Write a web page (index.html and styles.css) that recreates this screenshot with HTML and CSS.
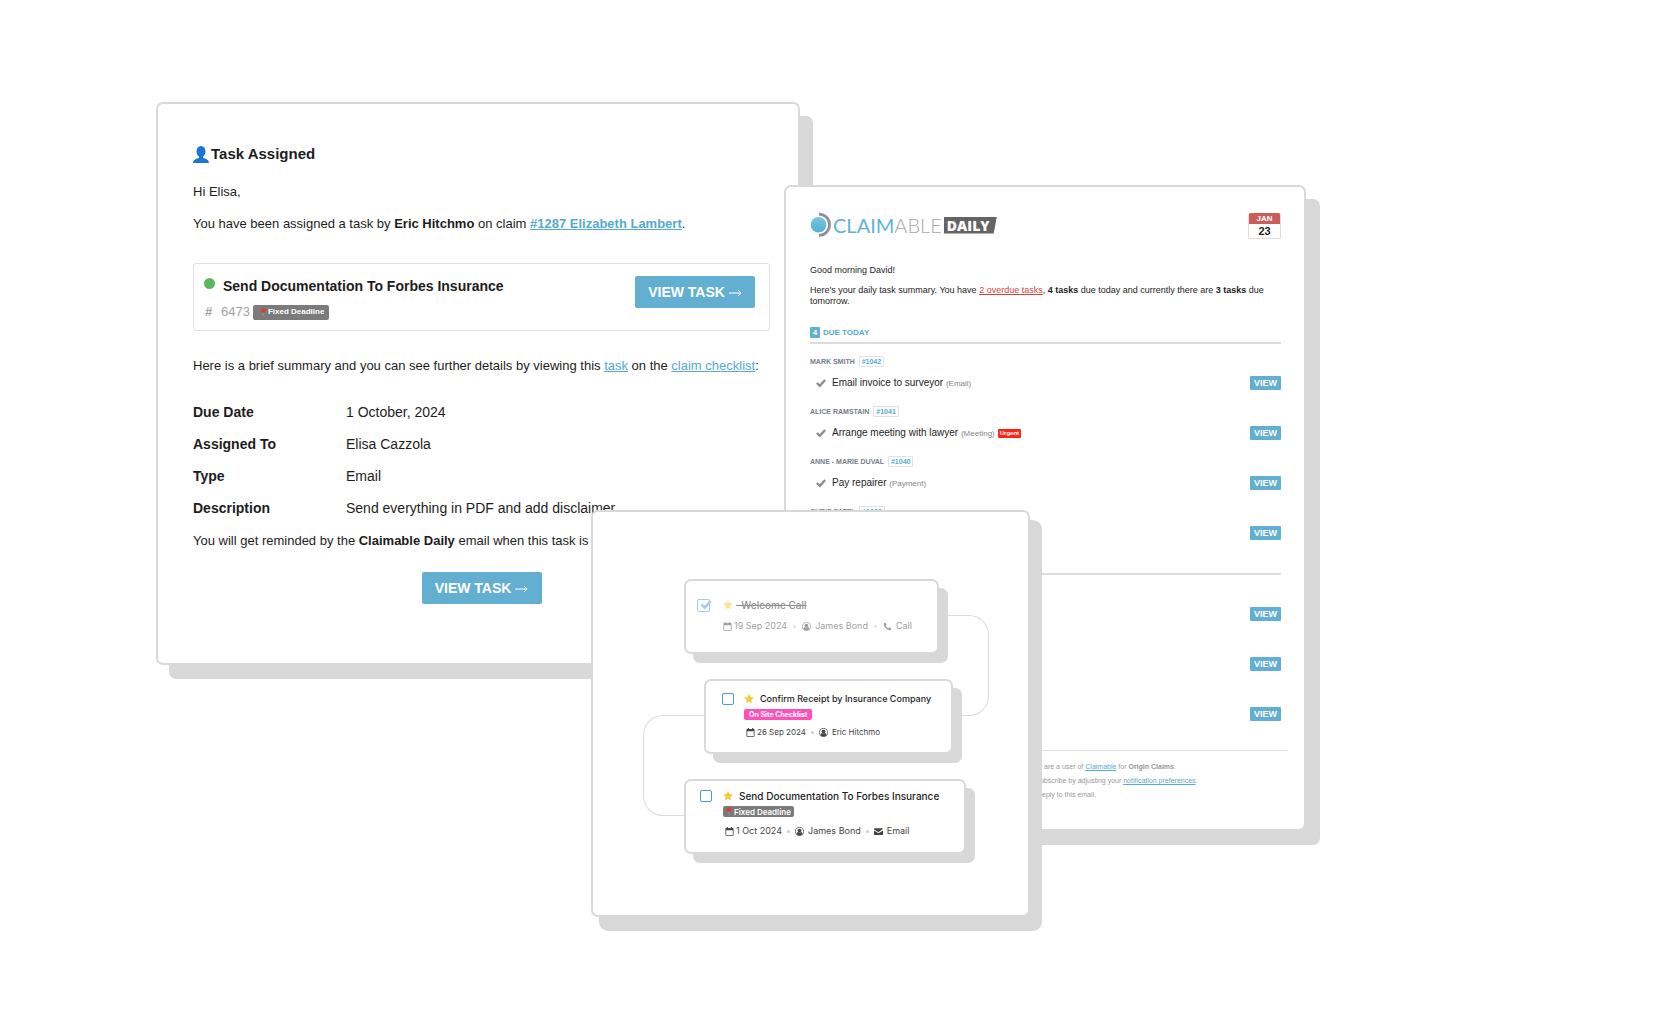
FILE: index.html
```html
<!DOCTYPE html>
<html lang="en">
<head>
    <meta charset="UTF-8">
    <meta name="viewport" content="width=device-width, initial-scale=1.0">
    <title>Claimable tasks</title>
    <link rel="stylesheet" href="styles.css">
</head>
<body>
    <!-- Shared icons -->
    <svg class="sprite" aria-hidden="true">
        <symbol id="star" viewBox="0 0 20 20"><path fill="#f4cb3f" d="M10 0l3 6.200 6.800.9-5 4.800 1.200 6.900L10 15.600 4 18.800l1.200-6.900-5-4.800 6.800-.9z"/></symbol>
        <symbol id="calendar" viewBox="0 0 20 20"><path fill="currentColor" fill-rule="evenodd" d="M4 0h2.500v2h7V0H16v2h1.500A1.500 1.500 0 0 1 19 3.500V18a1.500 1.500 0 0 1-1.500 1.500h-15A1.500 1.500 0 0 1 1 18V3.500A1.500 1.500 0 0 1 2.500 2H4zM2.800 7V17.700h14.400V7z"/></symbol>
        <symbol id="user" viewBox="0 0 20 20"><circle cx="10" cy="10" r="9" fill="none" stroke="currentColor" stroke-width="1.700"/><circle cx="10" cy="8" r="4.200" fill="currentColor"/><path fill="currentColor" d="M3.500 15.500c.4-3.500 2.200-4.500 3.600-4.500 1.700 1.500 4.100 1.500 5.800 0 1.400 0 3.200 1 3.600 4.500-1.500 2.200-3.800 3.200-6.500 3.200s-5-1-6.500-3.200z"/></symbol>
        <symbol id="phone" viewBox="0 0 20 20"><path fill="currentColor" d="M5.500 1.500L1.700 3C1 11 9 19 17 18.300L18.500 14.500l-4.500-2.600-2.200 2C9 12.700 7.300 11 6 8.200l2.100-2.200z"/></symbol>
        <symbol id="mail" viewBox="0 0 20 20"><path fill="currentColor" d="M0 4A1.500 1.500 0 0 1 1.500 2.500h17A1.500 1.500 0 0 1 20 4L10 11.500 0 5.500zM0 8l10 6 10-6.500v9a1.500 1.500 0 0 1-1.500 1.500h-17A1.500 1.500 0 0 1 0 16.500z"/></symbol>
        <symbol id="tick" viewBox="0 0 20 20"><path fill="none" stroke="currentColor" stroke-width="4.800" d="M1.700 10l6 5.700L18.300 4"/></symbol>
        <symbol id="pin" viewBox="0 0 12 20"><path fill="#8aa3ad" d="M5 9h2l-.5 10h-1z"/><circle cx="6" cy="5.500" r="5" fill="#e8392c"/></symbol>
    </svg>

    <main class="stage">
        <!-- Task assigned email -->
        <section class="card assigned">
            <h1 class="assigned-title">
                <svg class="person" viewBox="0 0 16 17"><ellipse cx="8" cy="5.500" rx="4.500" ry="5.500" fill="#1a76d2"/><path fill="#1a76d2" d="M6 9h4v3c3 .5 5.500 1.500 6 5H0c.5-3.500 3-4.500 6-5z"/></svg>Task Assigned
            </h1>
            <p class="hello">Hi Elisa,</p>
            <p class="intro">You have been assigned a task by <b>Eric Hitchmo</b> on claim <a href="#claim"><b>#1287 Elizabeth Lambert</b></a>.</p>
            <div class="task-box">
                <span class="dot"></span>
                <div class="task-info">
                    <h2>Send Documentation To Forbes Insurance</h2>
                    <div class="task-ref"><b>#</b><span>6473</span><span class="badge"><svg class="pin"><use href="#pin"/></svg>Fixed Deadline</span></div>
                </div>
                <button class="view-task" type="button">VIEW TASK <svg viewBox="0 0 13 8"><path d="M0 4h12M9 1l3 3-3 3"/></svg></button>
            </div>
            <p class="summary">Here is a brief summary and you can see further details by viewing this <a href="#task">task</a> on the <a href="#checklist">claim checklist</a>:</p>
            <table class="details">
                <tr><th scope="row">Due Date</th><td>1 October, 2024</td></tr>
                <tr><th scope="row">Assigned To</th><td>Elisa Cazzola</td></tr>
                <tr><th scope="row">Type</th><td>Email</td></tr>
                <tr><th scope="row">Description</th><td>Send everything in PDF and add disclaimer</td></tr>
            </table>
            <p class="reminder">You will get reminded by the <b>Claimable Daily</b> email when this task is due.</p>
            <div class="center">
                <button class="view-task" type="button">VIEW TASK <svg viewBox="0 0 13 8"><path d="M0 4h12M9 1l3 3-3 3"/></svg></button>
            </div>
        </section>

        <!-- Claimable daily email -->
        <section class="card daily">
            <header class="daily-head">
                <div class="logo">
                    <svg class="logo-mark" viewBox="0 0 21 26">
                        <defs><linearGradient id="blue" x2="0" y2="1"><stop stop-color="#7cc6e2"/><stop offset="1" stop-color="#56afd3"/></linearGradient></defs>
                        <path fill="none" stroke="#8d9296" stroke-width="2.800" d="M9 2.200A10.600 10.600 0 0 1 9 23.400"/>
                        <circle cx="8.500" cy="12.800" r="8.800" fill="#fff"/>
                        <circle cx="8.500" cy="12.800" r="7.800" fill="url(#blue)"/>
                    </svg>
                    <span class="logo-claim">CLAIM</span><span class="logo-able">ABLE</span><span class="logo-daily">DAILY</span>
                </div>
                <div class="date"><span class="month">JAN</span><span class="day">23</span></div>
            </header>
            <p class="morning">Good morning David!</p>
            <p class="overview">Here's your daily task summary. You have <a class="overdue" href="#overdue">2 overdue tasks</a>, <b>4 tasks</b> due today and currently there are <b>3 tasks</b> due tomorrow.</p>

            <h3 class="group"><span class="count">4</span>DUE TODAY</h3>
            <ul class="todo">
                <li>
                    <div class="client">MARK SMITH <a href="#1042">#1042</a></div>
                    <div class="todo-row"><svg class="tick"><use href="#tick"/></svg><span>Email invoice to surveyor <small>(Email)</small></span><button class="view" type="button">VIEW</button></div>
                </li>
                <li>
                    <div class="client">ALICE RAMSTAIN <a href="#1041">#1041</a></div>
                    <div class="todo-row"><svg class="tick"><use href="#tick"/></svg><span>Arrange meeting with lawyer <small>(Meeting)</small></span><span class="urgent">Urgent</span><button class="view" type="button">VIEW</button></div>
                </li>
                <li>
                    <div class="client">ANNE - MARIE DUVAL <a href="#1040">#1040</a></div>
                    <div class="todo-row"><svg class="tick"><use href="#tick"/></svg><span>Pay repairer <small>(Payment)</small></span><button class="view" type="button">VIEW</button></div>
                </li>
                <li>
                    <div class="client">CHRIS PATEL <a href="#1039">#1039</a></div>
                    <div class="todo-row"><svg class="tick"><use href="#tick"/></svg><span>Call client <small>(Call)</small></span><button class="view" type="button">VIEW</button></div>
                </li>
            </ul>

            <h3 class="group"><span class="count">3</span>DUE TOMORROW</h3>
            <ul class="todo">
                <li>
                    <div class="client">MARK SMITH <a href="#1038">#1038</a></div>
                    <div class="todo-row"><svg class="tick"><use href="#tick"/></svg><span>Send report <small>(Email)</small></span><button class="view" type="button">VIEW</button></div>
                </li>
                <li>
                    <div class="client">JOHN DOE <a href="#1037">#1037</a></div>
                    <div class="todo-row"><svg class="tick"><use href="#tick"/></svg><span>Call insurer <small>(Call)</small></span><button class="view" type="button">VIEW</button></div>
                </li>
                <li>
                    <div class="client">JANE ROE <a href="#1036">#1036</a></div>
                    <div class="todo-row"><svg class="tick"><use href="#tick"/></svg><span>Review claim <small>(Task)</small></span><button class="view" type="button">VIEW</button></div>
                </li>
            </ul>

            <footer class="daily-foot">
                <p>You are receiving this email because you are a user of <a href="#claimable">Claimable</a> for <b>Origin Claims</b>.</p>
                <p>You can change how often we email you or unsubscribe by adjusting your <a href="#preferences">notification preferences</a>.</p>
                <p>Please do not reply to this email.</p>
            </footer>
        </section>

        <!-- Checklist -->
        <section class="card checklist">
            <span class="link link-right"></span>
            <span class="link link-left"></span>
            <article class="step step-done">
                <label class="box"><input type="checkbox" checked aria-label="Welcome Call"><svg><use href="#tick"/></svg></label>
                <div>
                    <div class="step-title"><svg class="star"><use href="#star"/></svg><s>&nbsp;&nbsp;Welcome Call</s></div>
                    <div class="meta"><svg><use href="#calendar"/></svg>19 Sep 2024<i></i><svg><use href="#user"/></svg><span>James Bond</span><i></i><svg><use href="#phone"/></svg><span>Call</span></div>
                </div>
            </article>
            <article class="step step-receipt">
                <label class="box"><input type="checkbox" aria-label="Confirm Receipt by Insurance Company"></label>
                <div>
                    <div class="step-title"><svg class="star"><use href="#star"/></svg>Confirm Receipt by Insurance Company</div>
                    <span class="tag tag-pink">On Site Checklist</span>
                    <div class="meta"><svg><use href="#calendar"/></svg>26 Sep 2024<i></i><svg><use href="#user"/></svg><span>Eric Hitchmo</span></div>
                </div>
            </article>
            <article class="step step-send">
                <label class="box"><input type="checkbox" aria-label="Send Documentation To Forbes Insurance"></label>
                <div>
                    <div class="step-title"><svg class="star"><use href="#star"/></svg>Send Documentation To Forbes Insurance</div>
                    <span class="tag"><svg class="pin"><use href="#pin"/></svg>Fixed Deadline</span>
                    <div class="meta"><svg><use href="#calendar"/></svg>1 Oct 2024<i></i><svg><use href="#user"/></svg><span>James Bond</span><i></i><svg><use href="#mail"/></svg><span>Email</span></div>
                </div>
            </article>
        </section>
    </main>
</body>
</html>
```
FILE: styles.css
```css
* {
    box-sizing: border-box;
}

body {
    margin: 0;
    background: #fff;
    color: #1d1d1d;
    font-family: "Liberation Sans", Arial, sans-serif;
}

h1, h2, h3, p, ul {
    margin: 0;
    padding: 0;
}

ul {
    list-style: none;
}

button {
    border: 0;
    padding: 0;
    color: #fff;
    background: #63afd1;
    font-family: inherit;
    font-weight: bold;
    cursor: pointer;
}

a {
    color: #55aacf;
}

.sprite {
    display: block;
    width: 0;
    height: 0;
}

/* The cards share one row and overlap across the columns */
.stage {
    display: grid;
    grid-template-columns: 156fr 435fr 193fr 16fr 230fr 276fr 363fr;
    align-items: start;
    padding-bottom: 101px;
}

.card {
    grid-row: 1;
    position: relative;
    min-width: 0;
    background: #fff;
    border: 2px solid #d9d9d9;
    border-radius: 7px;
}

/* Task assigned */
.assigned {
    grid-column: 2 / 5;
    margin-top: 102px;
    padding: 40px 28px 59px 35px;
    box-shadow: 13px 14px 0 #d8d8d8;
    font-size: 13px;
    line-height: 20px;
}

.assigned-title {
    display: flex;
    align-items: center;
    gap: 2px;
    margin-bottom: 18px;
    font-size: 15px;
    line-height: 20px;
}

.person {
    width: 16px;
    height: 17px;
}

.hello {
    margin-bottom: 12px;
}

.intro {
    margin-bottom: 29px;
}

.task-box {
    display: flex;
    align-items: flex-start;
    height: 68px;
    padding: 12px 14px 0 10px;
    border: 1px solid #e0e0e0;
    border-radius: 3px;
}

.dot {
    width: 11px;
    height: 11px;
    margin-top: 2px;
    border-radius: 50%;
    background: #5cb85c;
}

.task-info {
    flex: 1;
}

.task-info h2 {
    margin-left: 8px;
    font-size: 14px;
    line-height: 20px;
}

.task-ref {
    display: flex;
    align-items: center;
    margin-left: -10px;
    padding-top: 6px;
    color: #a3a3a3;
    line-height: 20px;
}

.task-ref b {
    width: 16px;
}

.badge {
    display: flex;
    align-items: center;
    height: 15px;
    margin-left: 3px;
    padding: 0 5px 0 7px;
    border-radius: 2px;
    background: #7b7b7b;
    color: #fff;
    font-size: 8px;
    font-weight: bold;
}

.pin {
    width: 6px;
    height: 9px;
    margin-right: 2px;
}

.view-task {
    width: 120px;
    height: 32px;
    border-radius: 2px;
    font-size: 14px;
}

.view-task svg {
    width: 13px;
    height: 8px;
    fill: none;
    stroke: #fff;
}

.summary {
    margin: 25px 0 20px;
}

.details {
    width: 100%;
    border-collapse: collapse;
    font-size: 14px;
    line-height: 32px;
}

.details th {
    width: 153px;
    padding: 0;
    text-align: left;
}

.details td {
    padding: 0;
}

.reminder {
    margin: 7px 0 21px;
}

.center {
    display: flex;
    justify-content: center;
}

/* Claimable daily */
.daily {
    grid-column: 4 / 7;
    margin-top: 185px;
    padding: 26px 23px 27px 24px;
    box-shadow: 14px 14px 0 #d8d8d8;
    font-size: 9px;
    line-height: 11px;
}

.daily-head {
    display: flex;
    justify-content: space-between;
    height: 26px;
    margin-bottom: 26px;
}

.logo {
    display: flex;
    align-items: center;
    height: 24px;
    font-family: Lato, sans-serif;
    font-size: 20px;
    line-height: 24px;
}

.logo-mark {
    width: 21px;
    height: 26px;
    margin-right: 2px;
}

.logo-claim {
    color: #5db4d6;
}

.logo-able {
    color: #a5a8aa;
    font-weight: 300;
}

.logo-daily {
    width: 53px;
    height: 17px;
    margin-left: 2px;
    padding-left: 3px;
    background: #646464;
    clip-path: polygon(0 0, 100% 0, 94% 100%, 0 100%);
    color: #fff;
    font-family: "Open Sans", sans-serif;
    font-size: 14px;
    font-weight: 800;
    line-height: 17px;
}

.date {
    width: 33px;
    border: 1px solid #ddd;
    border-top: 0;
    border-radius: 2px;
    overflow: hidden;
    font-weight: bold;
    text-align: center;
}

.month, .day {
    display: block;
}

.month {
    background: #c95d59;
    color: #fff;
    font-size: 8px;
}

.day {
    font-size: 11px;
    line-height: 14px;
}

.morning {
    margin-bottom: 9px;
}

.overview {
    margin-bottom: 20px;
}

.overdue {
    color: #d9423a;
}

.group {
    display: flex;
    gap: 3px;
    margin-bottom: 12px;
    padding-bottom: 4px;
    border-bottom: 2px solid #dcdcdc;
    color: #55aacf;
    font-size: 8px;
    line-height: 11px;
}

.count {
    width: 10px;
    border-radius: 1px;
    background: #63afd1;
    color: #fff;
    text-align: center;
}

.todo {
    margin-bottom: 18px;
}

.client {
    margin-bottom: 9px;
    color: #75808a;
    font-size: 7px;
    font-weight: bold;
}

.client a {
    display: inline-block;
    margin-left: 2px;
    padding: 0 2px;
    border: 1px solid #dde3e6;
    border-radius: 1px;
    line-height: 9px;
    text-decoration: none;
}

.todo-row {
    display: flex;
    align-items: center;
    height: 14px;
    margin-bottom: 16px;
    padding-left: 6px;
    font-size: 10px;
}

.todo-row small {
    color: #858585;
    font-size: 8px;
}

.tick {
    width: 10px;
    height: 10px;
    margin-right: 6px;
    color: #8c8c8c;
}

.urgent {
    margin-left: 3px;
    padding: 0 2px;
    border-radius: 1px;
    background: #fb2413;
    color: #fff;
    font-size: 6px;
    font-weight: bold;
    line-height: 9px;
}

.view {
    width: 31px;
    height: 14px;
    margin-left: auto;
    border-radius: 1px;
    font-size: 9px;
}

.daily-foot {
    margin: 29px -7px 0;
    padding-top: 9px;
    border-top: 1px solid #e3e3e3;
    color: #999;
    font-size: 7px;
    line-height: 14px;
    text-align: center;
}

/* Checklist */
.checklist {
    grid-column: 3 / 6;
    display: flex;
    flex-direction: column;
    align-items: flex-start;
    gap: 25px;
    margin-top: 510px;
    padding: 67px 62px 61px 91px;
    box-shadow: 10px 12px 0 2px #d8d8d8;
    font-family: Inter, sans-serif;
}

.link {
    position: absolute;
    width: 90px;
    height: 101px;
    border: 1px solid #dcdcdc;
}

.link-right {
    top: 103px;
    left: 306px;
    border-left: 0;
    border-radius: 0 20px 20px 0;
}

.link-left {
    top: 203px;
    left: 50px;
    border-right: 0;
    border-radius: 20px 0 0 20px;
}

.step {
    position: relative;
    display: flex;
    align-items: flex-start;
    height: 75px;
    border: 2px solid #d9d9d9;
    border-radius: 7px;
    background: #fff;
    box-shadow: 9px 9px 0 #d8d8d8;
}

.step-done {
    width: 255px;
    padding: 17px 0 0 11px;
}

.step-receipt {
    width: 249px;
    margin-left: 20px;
    padding: 11px 0 0 16px;
}

.step-send {
    width: 282px;
    padding: 8px 0 0 14px;
}

.box {
    position: relative;
    display: flex;
    height: 14px;
    align-items: center;
    margin-right: 10px;
}

.box input {
    appearance: none;
    width: 12px;
    height: 12px;
    margin: 0;
    border: 1px solid #4b9fca;
    border-radius: 2px;
}

.box svg {
    position: absolute;
    top: 1px;
    left: 3px;
    width: 12px;
    height: 11px;
    color: #4b9fca;
}

.step-title {
    display: flex;
    align-items: center;
    gap: 6px;
    font-size: 10px;
    font-weight: 500;
    line-height: 14px;
    white-space: nowrap;
}

.star {
    width: 10px;
    height: 10px;
}

.tag {
    display: flex;
    align-items: center;
    width: max-content;
    height: 11px;
    margin-top: 3px;
    padding: 0 3px;
    border-radius: 2px;
    background: #7b7b7b;
    color: #fff;
    font-size: 8px;
    font-weight: 600;
}

.tag-pink {
    padding: 0 5px;
    background: #ff4fb8;
    font-size: 7px;
    font-weight: bold;
}

.meta {
    display: flex;
    align-items: center;
    margin: 6px 0 0 2px;
    color: #444;
    font-size: 9px;
    line-height: 12px;
    white-space: nowrap;
}

.meta svg {
    width: 9px;
    height: 9px;
    margin-right: 2px;
}

.meta svg + span {
    margin-left: 2px;
}

.meta i {
    width: 3px;
    height: 3px;
    margin: 0 5px;
    border-radius: 50%;
    background: #ccc;
}

.step-done .box, .step-done .step-title, .step-done .meta {
    opacity: .5;
}

.step-done .box {
    margin-right: 13px;
}

.step-done .box input {
    width: 13px;
    height: 13px;
}

.step-done .step-title {
    gap: 3px;
}

.step-done .meta {
    margin: 8px 0 0;
}

.step-done .meta i {
    margin: 0 6px;
}

.step-receipt .step-title {
    font-size: 9px;
}

.step-receipt .meta {
    font-size: 8px;
}

.step-send .box {
    margin-right: 11px;
}

.step-send .meta {
    margin-top: 8px;
}
```
